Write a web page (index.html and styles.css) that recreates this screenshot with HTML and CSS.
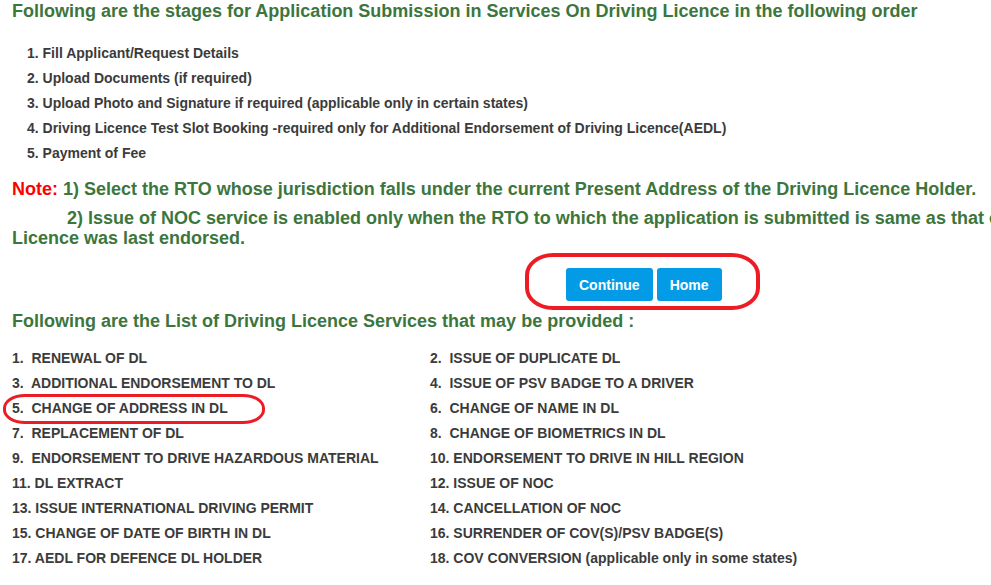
FILE: index.html
```html
<!DOCTYPE html>
<html lang="en">
<head>
<meta charset="utf-8">
<title>Services On Driving Licence</title>
<link rel="stylesheet" href="styles.css">
</head>
<body>
<div class="page">
  <h2 class="title">Following are the stages for Application Submission in Services On Driving Licence in the following order</h2>
  <ul class="stages">
    <li>1. Fill Applicant/Request Details</li>
    <li>2. Upload Documents (if required)</li>
    <li>3. Upload Photo and Signature if required (applicable only in certain states)</li>
    <li>4. Driving Licence Test Slot Booking -required only for Additional Endorsement of Driving Licence(AEDL)</li>
    <li>5. Payment of Fee</li>
  </ul>
  <div class="note">
    <p class="note-line"><span class="note-label">Note:</span> 1) Select the RTO whose jurisdiction falls under the current Present Address of the Driving Licence Holder.</p>
    <p class="note-line note-second"><span class="indent"></span>2) Issue of NOC service is enabled only when the RTO to which the application is submitted is same as that of the RTO where Driving Licence was last endorsed.</p>
  </div>
  <div class="actions">
    <button class="btn" type="button">Continue</button>
    <button class="btn" type="button">Home</button>
    <span class="mark mark-actions"></span>
  </div>
  <h2 class="title title-services">Following are the List of Driving Licence Services that may be provided :</h2>
  <div class="services">
    <div class="svc">1.&nbsp; RENEWAL OF DL</div>
    <div class="svc">2.&nbsp; ISSUE OF DUPLICATE DL</div>
    <div class="svc">3.&nbsp; ADDITIONAL ENDORSEMENT TO DL</div>
    <div class="svc">4.&nbsp; ISSUE OF PSV BADGE TO A DRIVER</div>
    <div class="svc svc-marked">5.&nbsp; CHANGE OF ADDRESS IN DL<span class="mark mark-svc"></span></div>
    <div class="svc">6.&nbsp; CHANGE OF NAME IN DL</div>
    <div class="svc">7.&nbsp; REPLACEMENT OF DL</div>
    <div class="svc">8.&nbsp; CHANGE OF BIOMETRICS IN DL</div>
    <div class="svc">9.&nbsp; ENDORSEMENT TO DRIVE HAZARDOUS MATERIAL</div>
    <div class="svc">10. ENDORSEMENT TO DRIVE IN HILL REGION</div>
    <div class="svc">11. DL EXTRACT</div>
    <div class="svc">12. ISSUE OF NOC</div>
    <div class="svc">13. ISSUE INTERNATIONAL DRIVING PERMIT</div>
    <div class="svc">14. CANCELLATION OF NOC</div>
    <div class="svc">15. CHANGE OF DATE OF BIRTH IN DL</div>
    <div class="svc">16. SURRENDER OF COV(S)/PSV BADGE(S)</div>
    <div class="svc">17. AEDL FOR DEFENCE DL HOLDER</div>
    <div class="svc">18. COV CONVERSION (applicable only in some states)</div>
  </div>
</div>
</body>
</html>
```
FILE: styles.css
```css
html, body {
  margin: 0;
  padding: 0;
  background: #ffffff;
  overflow: hidden;
}
body {
  font-family: "Liberation Sans", Arial, sans-serif;
  font-weight: bold;
  color: #3b3b3b;
}
.page {
  width: 1250px;
  padding-left: 12px;
  position: relative;
}
.title {
  margin: 0;
  font-size: 18px;
  line-height: 22px;
  color: #3c763d;
  white-space: nowrap;
}
.stages {
  list-style: none;
  margin: 19px 0 0 0;
  padding: 0 0 0 15px;
  font-size: 14px;
  line-height: 25px;
}
.note {
  margin-top: 13px;
  color: #3c763d;
  font-size: 18px;
  line-height: 20px;
}
.note-line {
  margin: 0;
}
.note-second {
  margin-top: 9px;
}
.note-label {
  color: #ff0000;
}
.indent {
  display: inline-block;
  width: 55px;
}
.actions {
  position: relative;
  display: flex;
  gap: 4px;
  margin-top: 20px;
  padding-left: 554px;
}
.btn {
  font-family: "Liberation Sans", Arial, sans-serif;
  font-weight: bold;
  font-size: 14px;
  color: #ffffff;
  background: #039be5;
  border: none;
  border-radius: 3px;
  height: 33px;
  padding: 0 13px;
}
.mark {
  position: absolute;
  border: 3px solid #ed1c24;
  border-radius: 28px / 22px;
  box-sizing: border-box;
  pointer-events: none;
}
.mark-actions {
  left: 513px;
  top: -15px;
  width: 235px;
  height: 57px;
  border-width: 4px;
}
.title-services {
  margin-top: 9px;
}
.services {
  display: grid;
  grid-template-columns: 418px 1fr;
  margin-top: 14px;
  font-size: 14px;
  line-height: 25px;
  color: #3b3b3b;
}
.svc {
  white-space: nowrap;
}
.svc-marked {
  position: relative;
}
.mark-svc {
  left: -9px;
  top: -2px;
  width: 262px;
  height: 30px;
  border-radius: 22px / 14px;
}
```
